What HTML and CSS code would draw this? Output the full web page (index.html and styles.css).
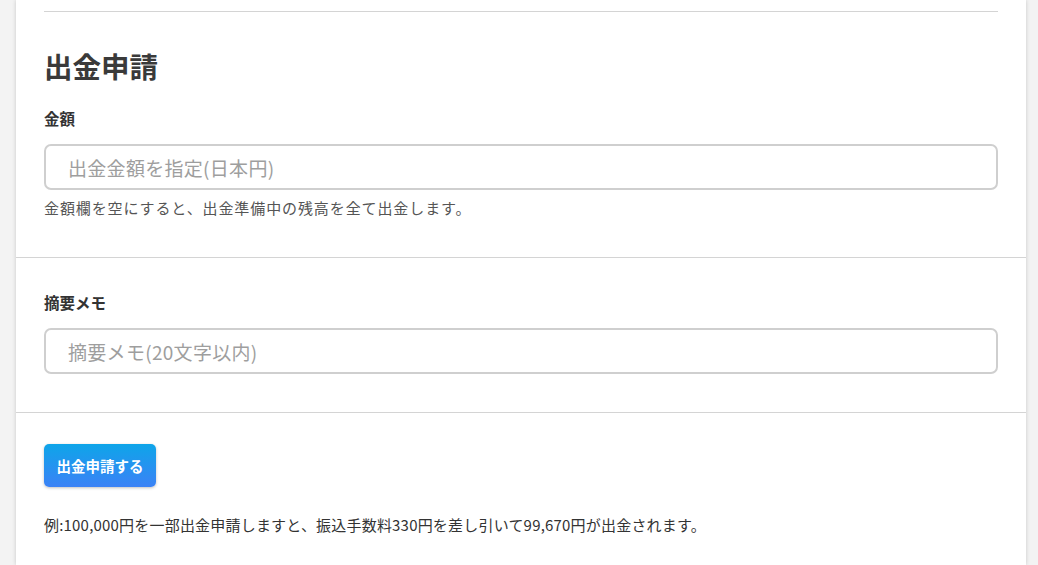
FILE: index.html
```html
<!DOCTYPE html>
<html lang="ja">
<head>
<meta charset="utf-8">
<link rel="stylesheet" href="styles.css">
</head>
<body>
<div class="card">
  <section class="sec sec-top">
    <div class="rule"></div>
    <h2 class="title">出金申請</h2>
    <label class="label">金額</label>
    <input class="field" type="text" placeholder="出金金額を指定(日本円)">
    <p class="help">金額欄を空にすると、出金準備中の残高を全て出金します。</p>
  </section>
  <section class="sec sec-memo">
    <label class="label">摘要メモ</label>
    <input class="field" type="text" placeholder="摘要メモ(20文字以内)">
  </section>
  <section class="sec sec-action">
    <button class="btn" type="button">出金申請する</button>
    <p class="note">例:100,000円を一部出金申請しますと、振込手数料330円を差し引いて99,670円が出金されます。</p>
  </section>
</div>
</body>
</html>
```
FILE: styles.css
```css
html, body {
  margin: 0;
  padding: 0;
  background: #f3f3f3;
  font-family: "Noto Sans CJK JP", "Noto Sans", sans-serif;
  color: #333;
}
.card {
  margin-left: 16px;
  width: 1010px;
  min-height: 565px;
  background: #fff;
  box-shadow: 0 0 4px rgba(0,0,0,0.18);
}
.sec {
  padding: 0 28px;
  display: flex;
  flex-direction: column;
  align-items: flex-start;
}
.sec-top {
  padding-top: 11px;
  padding-bottom: 39px;
}
.rule {
  align-self: stretch;
  border-top: 1px solid #d4d4d4;
}
.title {
  margin: 34px 0 0;
  font-size: 28.5px;
  line-height: 40px;
  font-weight: 700;
  color: #3a3a3a;
}
.label {
  margin-top: 21px;
  font-size: 15.5px;
  line-height: 22px;
  font-weight: 700;
  color: #333;
}
.field {
  box-sizing: border-box;
  align-self: stretch;
  margin-top: 15px;
  height: 46px;
  border: 2px solid #cfcfcf;
  border-radius: 7px;
  padding: 0 22px;
  font-family: inherit;
  font-size: 19px;
  letter-spacing: 0.3px;
  color: #333;
  outline: none;
}
.field::placeholder {
  color: #9e9e9e;
}
.help {
  margin: 8px 0 0;
  font-size: 15px;
  line-height: 20px;
  letter-spacing: 0.9px;
  color: #555;
}
.sec-memo {
  border-top: 1px solid #d4d4d4;
  padding-top: 12px;
  padding-bottom: 38px;
}
.sec-action {
  border-top: 1px solid #d4d4d4;
  padding-top: 31px;
  padding-bottom: 20px;
}
.btn {
  height: 43px;
  padding: 0 12.5px;
  border: none;
  border-radius: 5px;
  background: linear-gradient(to bottom, #0ea5e9, #3b82f6);
  color: #fff;
  font-family: inherit;
  font-size: 14.5px;
  font-weight: 700;
  box-shadow: 0 1px 3px rgba(0,0,0,0.25);
}
.note {
  margin: 28px 0 0;
  font-size: 15px;
  line-height: 20px;
  letter-spacing: 0.2px;
  color: #333;
}
```
